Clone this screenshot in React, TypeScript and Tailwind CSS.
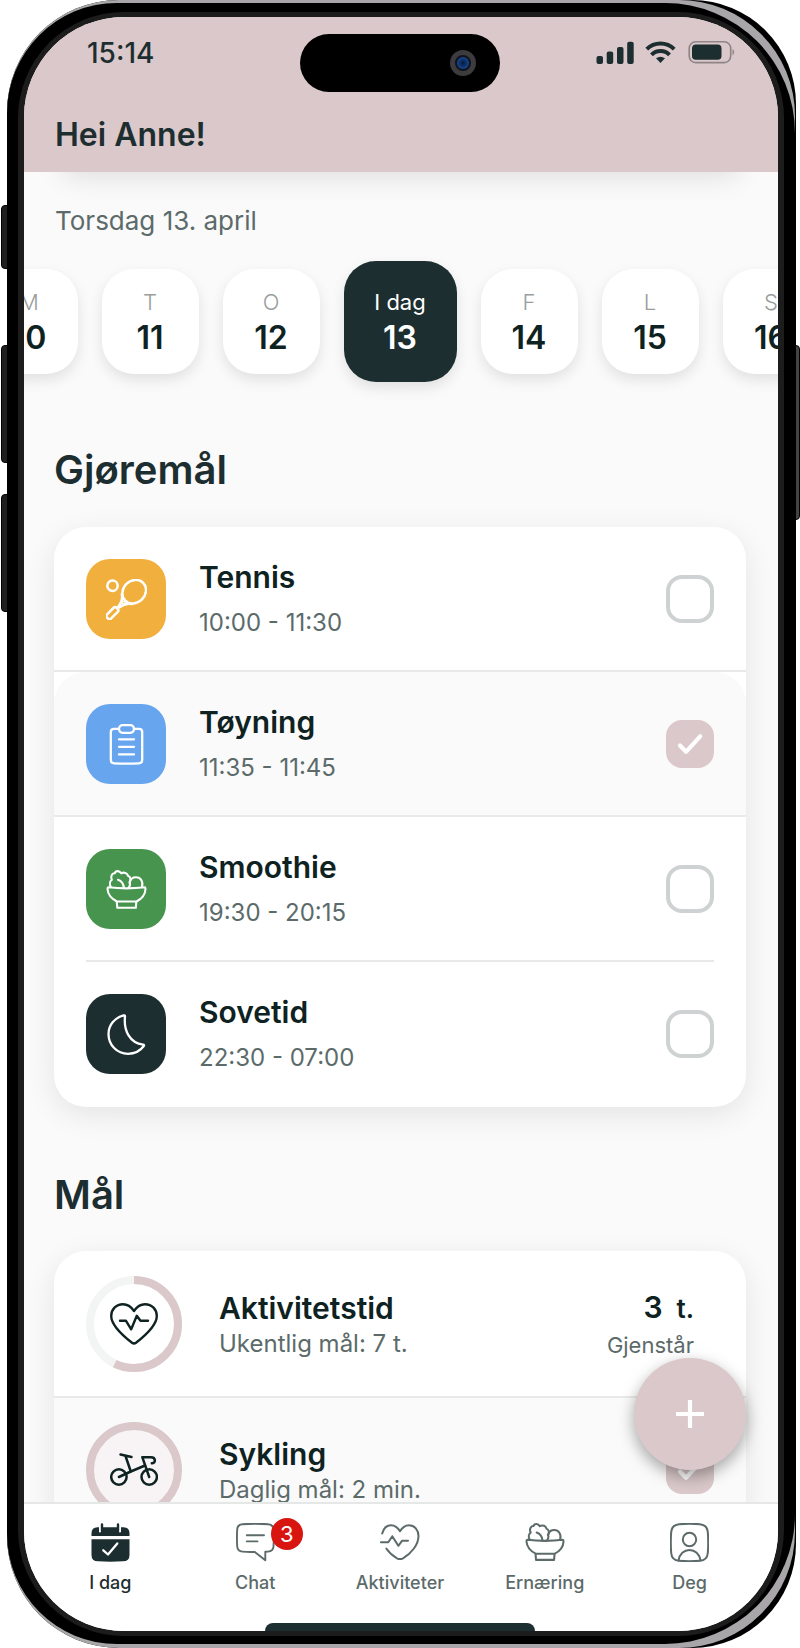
import { useState } from 'react'
import type { ReactNode } from 'react'

interface Day {
  label: string
  date: number
}

interface Task {
  id: string
  title: string
  time: string
  color: string
  icon: ReactNode
  done: boolean
}

interface IconProps {
  className?: string
}

function TennisIcon() {
  return (
    <svg viewBox="0 0 41 41" className="size-[41px]" fill="none" stroke="currentColor" strokeWidth="2.5" strokeLinejoin="round" strokeLinecap="round">
      <circle cx="6.5" cy="6.8" r="5.2" />
      <ellipse cx="28.2" cy="12.7" rx="12.6" ry="11" transform="rotate(-45 28.2 12.7)" />
      <path d="M15.8 15.5C17 19.5 15.5 23.5 12.3 27.8" />
      <path d="M26 25C21.5 24 17.5 25 13.2 28.5" />
      <circle cx="17.6" cy="23.6" r="1.4" strokeWidth="1.6" />
      <rect x="-0.5" y="31.3" width="13.6" height="5.8" rx="2" transform="rotate(-45 6.3 34.2)" />
    </svg>
  )
}

function ClipboardIcon() {
  return (
    <svg viewBox="0 0 41 41" className="size-[41px]" fill="none" stroke="currentColor" strokeWidth="2.3" strokeLinejoin="round" strokeLinecap="round">
      <path d="M13 4.8H8Q4.8 4.8 4.8 8V36Q4.8 39.2 8 39.3Q20.5 40 33 39.3Q36.2 39.2 36.2 36V8Q36.2 4.8 33 4.8H28" />
      <rect x="13" y="1.2" width="15" height="7.6" rx="3.6" />
      <path d="M13 15.3h15M13 22.8h15M13 30.4h15" />
    </svg>
  )
}

function BowlIcon({ className }: IconProps) {
  return (
    <svg viewBox="0 0 41 41" className={className} fill="none" stroke="currentColor" strokeWidth="2.1" strokeLinejoin="round" strokeLinecap="round">
      <path d="M2.2 18.2Q20.5 20.5 38.8 18.2Q39.5 18.2 39.5 20C39.2 26 35.5 30 30.5 32.5H11C6 30 2 26 1.5 20Q1.5 18.2 2.2 18.2Z" />
      <path d="M10.8 33L11.3 38.8H29.8L30.3 33" />
      <path d="M4.8 18C3.2 15 4 12 5.8 10.8C4 7 6.5 4 8.8 4.2C9.5 1.4 13.5 1.4 15.2 4.2C18 2.8 21.5 4 22 6.8C25 8 25 11.5 23.5 13.2C24.5 15 24 17 22.5 18.8" />
      <path d="M12 10.8C15.5 12 17.5 15 18 19" />
      <path d="M23.8 13C24.5 10 27 8.2 30 8.2C34.5 8.2 37.5 12.5 36 18" />
    </svg>
  )
}

function MoonIcon() {
  return (
    <svg viewBox="0 0 41 41" className="size-[41px]" fill="none" stroke="currentColor" strokeWidth="2.3" strokeLinejoin="round" strokeLinecap="round">
      <path d="M17.6 1.4C8.5 4 2.5 11 2.5 20C2.5 31 11 39.8 22 39.8C29 39.8 34.5 36.5 37.8 32Q38.6 30.8 37 30.6C24 29 17.5 17 19 2.4Q19 1 17.6 1.4Z" />
    </svg>
  )
}

function HeartPulseIcon() {
  return (
    <svg viewBox="0 0 48 42" className="h-[42px] w-12" fill="none" stroke="currentColor" strokeWidth="2.4" strokeLinejoin="round" strokeLinecap="round">
      <path d="M24 8C21 3.5 17.5 1.2 13 1.2C6 1.2 1.2 6.5 1.2 13C1.2 22 12 32 22 39.8Q24 41.2 26 39.8C36 32 46.8 22 46.8 13C46.8 6.5 42 1.2 35 1.2C30.5 1.2 27 3.5 24 8Z" />
      <path d="M10 17.8H16L21.2 26.3L26.8 12.8L30.5 17.8H38" />
    </svg>
  )
}

function BikeIcon() {
  return (
    <svg viewBox="0 0 48 34" className="h-[34px] w-12" fill="none" stroke="currentColor" strokeWidth="2.5" strokeLinejoin="round" strokeLinecap="round">
      <circle cx="8.9" cy="24" r="7.7" />
      <circle cx="39.2" cy="24" r="7.7" />
      <path d="M10.5 1.5L21.5 4M15.5 3L20.8 18.5" />
      <path d="M8.9 24L20.8 18.5L35 12.5" />
      <path d="M39.2 24L32.3 4.2H41C46 4.2 46 10.5 41.8 10.3" />
    </svg>
  )
}

function CalendarIcon() {
  return (
    <svg viewBox="0 0 39 39" className="size-[39px]" fill="none" strokeLinecap="round" strokeLinejoin="round">
      <path d="M0.5 13V10.5Q0.5 4.3 6.5 4.3H32.5Q38.5 4.3 38.5 10.5V13Z" fill="currentColor" />
      <path d="M0.5 16.3H38.5V32Q38.5 38.3 32 38.3Q19.5 39 7 38.3Q0.5 38.3 0.5 32Z" fill="currentColor" />
      <path d="M9 3.5V8.5M29 3.5V8.5" stroke="#fff" strokeWidth="2" />
      <path d="M11 1.5V8M27 1.5V8" stroke="currentColor" strokeWidth="2.4" />
      <path d="M12.3 27.3L17 31.5L26.3 20.5" stroke="#fff" strokeWidth="2.3" />
    </svg>
  )
}

function ChatIcon() {
  return (
    <svg viewBox="0 0 39 39" className="size-[39px]" fill="none" stroke="currentColor" strokeWidth="1.9" strokeLinejoin="round" strokeLinecap="round">
      <path d="M6.5 1.2Q19 0.2 32 1.2Q37.2 1.5 37.5 6.5Q38 15 37.5 23.5Q37.2 28.3 32 28.6L29.3 28.8V37.3L18.8 28.9Q12 29.2 6.5 28.6Q1.5 28.3 1.2 23.5Q0.7 15 1.2 6.5Q1.5 1.5 6.5 1.2Z" />
      <path d="M10.8 12.2H28M10.8 18.4H21.5" />
    </svg>
  )
}

function ActivityIcon() {
  return (
    <svg viewBox="0 0 40 40" className="size-10" fill="none" stroke="currentColor" strokeWidth="2" strokeLinejoin="round" strokeLinecap="round">
      <path d="M2.2 11.5C3.5 6.3 6.5 3.2 11 3.2C14.8 3.2 17.8 5.5 20 9.3C22.2 5.5 25.2 3.2 29 3.2C34.5 3.2 38.5 8 38.5 14C38.5 23 31 31.5 23 36.3Q20 37.8 17 36.3C13 34 9 30.5 6.3 26.5" />
      <path d="M0.9 20.2H8.3L12.3 14.2L18.3 23.8L22 18.8H28" />
    </svg>
  )
}

function ProfileIcon() {
  return (
    <svg viewBox="0 0 39 39" className="size-[39px]" fill="none" stroke="currentColor" strokeWidth="2" strokeLinecap="round">
      <path d="M9 1.2Q19.5 0.4 30 1.2Q37.2 1.8 37.8 9Q38.6 19.5 37.8 30Q37.2 37.2 30 37.8Q19.5 38.6 9 37.8Q1.8 37.2 1.2 30Q0.4 19.5 1.2 9Q1.8 1.8 9 1.2Z" />
      <circle cx="19.5" cy="16.5" r="6.7" />
      <path d="M8.5 37.5C9.5 31 14 27 19.5 27S29.5 31 30.5 37.5" />
    </svg>
  )
}

function StatusIcons() {
  return (
    <svg viewBox="0 0 140 24" className="h-6 w-[140px]" fill="#1d2e30">
      <rect x="0.5" y="15" width="6.5" height="8" rx="2" />
      <rect x="10.7" y="10.5" width="6.5" height="12.5" rx="2" />
      <rect x="21" y="6" width="6.5" height="17" rx="2" />
      <rect x="31.2" y="0.8" width="6.5" height="22.2" rx="2" />
      <g fill="none" stroke="#1d2e30" strokeWidth="4">
        <path d="M50.8 8.2A19.5 19.5 0 0 1 78.2 8.2" />
        <path d="M55.5 13.8A12.5 12.5 0 0 1 73.5 13.8" />
      </g>
      <path d="M60 17.3Q64.5 14.3 69 17.3L64.5 22Z" />
      <rect x="93.2" y="0.8" width="41.5" height="20.8" rx="6.5" fill="none" stroke="#8f8586" strokeWidth="1.6" />
      <rect x="96" y="3.6" width="29.5" height="15.2" rx="3.8" />
      <path d="M136.5 8Q140 11.2 136.5 14.4Z" fill="#8f8586" />
    </svg>
  )
}

function Checkbox({ checked, label, onChange }: { checked: boolean; label: string; onChange: () => void }) {
  return (
    <label className="relative block size-12 shrink-0">
      <span className="sr-only">{label}</span>
      <input
        type="checkbox"
        checked={checked}
        onChange={onChange}
        className="peer block size-12 appearance-none rounded-2xl border-4 border-[#cfd2d2] bg-white checked:border-[#dac8ca] checked:bg-[#dac8ca]"
      />
      <svg
        viewBox="0 0 48 48"
        className="pointer-events-none absolute inset-0 hidden size-12 peer-checked:block"
        fill="none"
        stroke="#fff"
        strokeWidth="4.2"
        strokeLinecap="round"
        strokeLinejoin="round"
      >
        <path d="M14 25.5L20 31.8L34.2 16.3" />
      </svg>
    </label>
  )
}

function ProgressRing({ value, children }: { value: number; children: ReactNode }) {
  const length = 2 * Math.PI * 44
  return (
    <div className="relative grid size-24 shrink-0 place-items-center text-[#0f2222]">
      <svg viewBox="0 0 96 96" className="absolute inset-0 size-24 -rotate-90" fill="none" strokeWidth="8">
        <circle cx="48" cy="48" r="44" stroke="#f3f4f4" fill={value === 1 ? '#f8f4f5' : 'none'} />
        <circle cx="48" cy="48" r="44" stroke="#dac8ca" strokeDasharray={`${length * value} ${length}`} />
      </svg>
      <div className="relative">{children}</div>
    </div>
  )
}

const days: Day[] = [
  { label: 'M', date: 10 },
  { label: 'T', date: 11 },
  { label: 'O', date: 12 },
  { label: 'I dag', date: 13 },
  { label: 'F', date: 14 },
  { label: 'L', date: 15 },
  { label: 'S', date: 16 },
]

const initialTasks: Task[] = [
  { id: 'tennis', title: 'Tennis', time: '10:00 - 11:30', color: 'bg-[#f1af3d]', icon: <TennisIcon />, done: false },
  { id: 'toyning', title: 'Tøyning', time: '11:35 - 11:45', color: 'bg-[#68a5ef]', icon: <ClipboardIcon />, done: true },
  { id: 'smoothie', title: 'Smoothie', time: '19:30 - 20:15', color: 'bg-[#47944f]', icon: <BowlIcon className="size-[41px]" />, done: false },
  { id: 'sovetid', title: 'Sovetid', time: '22:30 - 07:00', color: 'bg-[#1d2e30]', icon: <MoonIcon />, done: false },
]

const tabs = [
  { label: 'I dag', icon: <CalendarIcon />, badge: 0 },
  { label: 'Chat', icon: <ChatIcon />, badge: 3 },
  { label: 'Aktiviteter', icon: <ActivityIcon />, badge: 0 },
  { label: 'Ernæring', icon: <BowlIcon className="size-10" />, badge: 0 },
  { label: 'Deg', icon: <ProfileIcon />, badge: 0 },
]

function Header() {
  return (
    <header className="relative z-10 bg-[#dac8ca] pt-[17px] pb-[17px] shadow-[0_44px_28px_-40px_rgba(0,0,0,0.12)]">
      <div className="grid grid-cols-[1fr_200px_1fr] items-start pr-0.5">
        <div className="flex h-[38px] items-center pl-[63px] text-[28px] leading-8 font-medium">15:14</div>
        <div className="flex h-[58px] items-center justify-end rounded-full bg-black pr-6">
          <div className="grid size-[26px] place-items-center rounded-full bg-[#3c3c3e]">
            <div className="grid size-4 place-items-center rounded-full bg-[#10131c]">
              <div className="size-3 rounded-full bg-radial from-[#061a3c] to-[#1c5cb8]" />
            </div>
          </div>
        </div>
        <div className="flex h-[38px] items-center justify-end pr-10">
          <StatusIcons />
        </div>
      </div>
      <h1 className="mt-[23px] px-[31px] text-[32px] leading-10 font-semibold">Hei Anne!</h1>
    </header>
  )
}

function DayPicker() {
  const [selected, setSelected] = useState(13)

  return (
    <div className="mt-6 flex items-center justify-center gap-6 pr-0.5">
      {days.map((day) => (
        <button
          key={day.date}
          type="button"
          onClick={() => setSelected(day.date)}
          className={
            day.date === selected
              ? 'flex h-[121px] w-[113px] shrink-0 flex-col items-center justify-center rounded-[32px] bg-[#1d2e30] text-white shadow-[0_6px_14px_rgba(0,0,0,0.1)]'
              : 'flex h-[105px] w-[97px] shrink-0 flex-col items-center justify-center rounded-[32px] bg-white text-[#0f2222] shadow-[0_6px_14px_rgba(0,0,0,0.1)]'
          }
        >
          <span className={day.date === selected ? 'text-[22px] leading-8' : 'text-[22px] leading-8 font-light text-[#999d9d]'}>
            {day.label}
          </span>
          <span className="text-[32px] leading-10 font-semibold">{day.date}</span>
        </button>
      ))}
    </div>
  )
}

export default function App() {
  const [tasks, setTasks] = useState(initialTasks)
  const [cyclingDone, setCyclingDone] = useState(true)
  const [activeTab, setActiveTab] = useState('I dag')

  const toggleTask = (id: string) => {
    setTasks(tasks.map((task) => (task.id === id ? { ...task, done: !task.done } : task)))
  }

  return (
    <div className="relative h-screen bg-white pr-1 pl-[7px] font-[Inter,sans-serif] text-[#1d2e30]">
      {/* side buttons */}
      <div className="absolute top-[205px] left-px h-16 w-[7px] rounded-l-sm border border-black bg-[#1f1f1f]" />
      <div className="absolute top-[345px] left-px h-[118px] w-[7px] rounded-l-sm border border-black bg-[#1f1f1f]" />
      <div className="absolute top-[494px] left-px h-[118px] w-[7px] rounded-l-sm border border-black bg-[#1f1f1f]" />
      <div className="absolute top-[345px] right-0 h-[175px] w-[5px] rounded-r-sm border border-black bg-[#444]" />

      <div className="relative h-full rounded-l-[112px] rounded-r-[104px] bg-black pr-px">
        <div className="h-full rounded-l-[112px] rounded-r-[116px] bg-[#a8a6a8] pt-[3px] pb-1">
          <div className="h-full rounded-l-[110px] rounded-r-[130px] bg-black px-[11px] pt-[9px] pb-2">
            <div className="h-full rounded-[106px] bg-[#1c1c1c] px-1.5 py-[5px]">
              <div className="relative flex h-full flex-col overflow-hidden rounded-[100px] bg-[#fafafa]">
                <Header />

                <div className="relative min-h-0 flex-1">
                  <main className="h-full overflow-x-hidden overflow-y-auto [scrollbar-width:none]">
                    <p className="mt-[33px] px-[31px] text-[26px] leading-8 text-[#5c6b6a]">Torsdag 13. april</p>

                    <DayPicker />

                    <section className="mt-16 pr-8 pl-[30px]">
                      <h2 className="text-[40px] leading-12 font-semibold">Gjøremål</h2>
                      <ul className="mt-[33px] overflow-hidden rounded-[32px] bg-white pb-0.5 shadow-[0_8px_30px_rgba(0,0,0,0.09)]">
                        {tasks.map((task, i) => (
                          <li key={task.id} className={i < 2 ? 'border-b-2 border-[#e8eaea]' : ''}>
                            <div className={task.done ? 'rounded-t-[32px] bg-[#fafafa] px-8' : 'px-8'}>
                              <div
                                className={
                                  i === 2
                                    ? 'flex items-center gap-[33px] border-b-2 border-[#e8eaea] pt-8 pb-[31px]'
                                    : 'flex items-center gap-[33px] pt-8 pb-[31px]'
                                }
                              >
                                <div className={`grid size-20 shrink-0 place-items-center rounded-3xl text-white ${task.color}`}>
                                  {task.icon}
                                </div>
                                <div className="flex min-w-0 flex-1 flex-col gap-3">
                                  <h3 className="text-[30px] leading-9 font-semibold text-[#0f2222]">{task.title}</h3>
                                  <p className="text-2xl leading-8 text-[#5c6b6a]">{task.time}</p>
                                </div>
                                <Checkbox checked={task.done} label={task.title} onChange={() => toggleTask(task.id)} />
                              </div>
                            </div>
                          </li>
                        ))}
                      </ul>
                    </section>

                    <section className="mt-16 pr-8 pb-16 pl-[30px]">
                      <h2 className="text-[40px] leading-12 font-semibold">Mål</h2>
                      <ul className="mt-8 overflow-hidden rounded-[32px] bg-white shadow-[0_8px_30px_rgba(0,0,0,0.09)]">
                        <li className="flex items-center gap-[37px] border-b-2 border-[#e8eaea] px-8 pt-[25px] pb-6">
                          <ProgressRing value={4 / 7}>
                            <HeartPulseIcon />
                          </ProgressRing>
                          <div className="min-w-0 flex-1 pt-1">
                            <h3 className="text-[30px] leading-9 font-semibold text-[#0f2222]">Aktivitetstid</h3>
                            <p className="text-2xl leading-9 text-[#5c6b6a]">Ukentlig mål: 7 t.</p>
                          </div>
                          <div className="pt-1 pr-5 text-right">
                            <div className="flex items-baseline justify-end gap-3.5 leading-9 font-semibold text-[#0f2222]">
                              <span className="text-[30px]">3</span>
                              <span className="text-[26px]">t.</span>
                            </div>
                            <p className="text-[22px] leading-9 text-[#5c6b6a]">Gjenstår</p>
                          </div>
                        </li>
                        <li className="flex items-center gap-[37px] bg-[#fafafa] px-8 py-6">
                          <ProgressRing value={1}>
                            <BikeIcon />
                          </ProgressRing>
                          <div className="min-w-0 flex-1 pt-1">
                            <h3 className="text-[30px] leading-9 font-semibold text-[#0f2222]">Sykling</h3>
                            <p className="text-2xl leading-9 text-[#5c6b6a]">Daglig mål: 2 min.</p>
                          </div>
                          <Checkbox checked={cyclingDone} label="Sykling" onChange={() => setCyclingDone(!cyclingDone)} />
                        </li>
                      </ul>
                    </section>
                  </main>

                  {/* floating add button */}
                  <button
                    type="button"
                    aria-label="Legg til"
                    className="absolute right-8 bottom-8 grid size-28 place-items-center rounded-full bg-[#dac8ca] shadow-[0_6px_16px_rgba(0,0,0,0.35)]"
                  >
                    <svg viewBox="0 0 28 28" className="size-7" stroke="#fff" strokeWidth="4.2">
                      <path d="M14 0V28M0 14H28" />
                    </svg>
                  </button>
                </div>

                <nav className="border-t-2 border-[#e6e8e8] bg-white pr-4 pl-3.5">
                  <div className="flex pt-[18px]">
                    {tabs.map((tab) => (
                      <button
                        key={tab.label}
                        type="button"
                        onClick={() => setActiveTab(tab.label)}
                        className={
                          tab.label === activeTab
                            ? 'flex flex-1 flex-col items-center text-[18px] leading-6 font-medium text-[#1d2e30]'
                            : 'flex flex-1 flex-col items-center text-[18px] leading-6 font-medium text-[#5c6b6a]'
                        }
                      >
                        <span className="relative grid h-10 place-items-center">
                          {tab.icon}
                          {tab.badge > 0 && (
                            <span className="absolute -top-1 -right-7 grid size-8 place-items-center rounded-full bg-[#d8150f] text-[22px] leading-8 font-normal text-white">
                              {tab.badge}
                            </span>
                          )}
                        </span>
                        <span className="mt-[9px]">{tab.label}</span>
                      </button>
                    ))}
                  </div>
                  <div className="mx-auto mt-7 h-2 w-[270px] rounded-t-lg bg-[#1d2e30]" />
                </nav>
              </div>
            </div>
          </div>
        </div>
      </div>
    </div>
  )
}
